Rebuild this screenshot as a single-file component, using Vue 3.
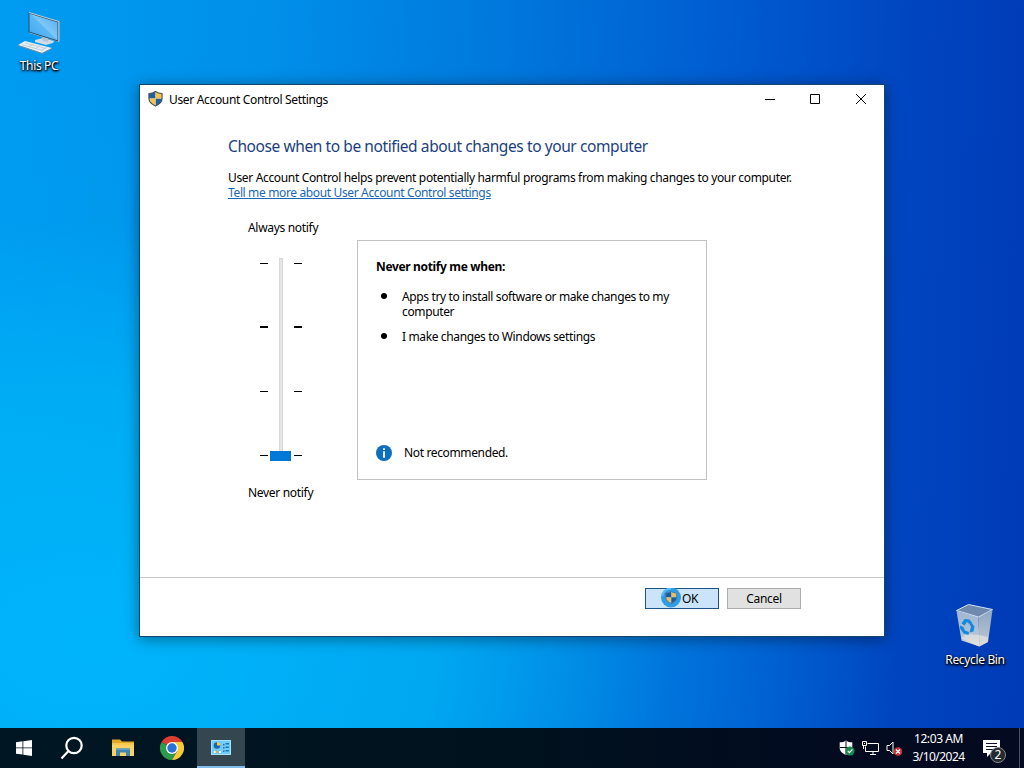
<script setup>
const ticks = [
  { id: 4, bold: false },
  { id: 3, bold: true },
  { id: 2, bold: false },
  { id: 1, bold: false },
]
const shield = 'M8 0.5C6 2 3.5 2.6 1 2.6V8c0 4 3.2 6.3 7 8 3.800-1.700 7-4 7-8V2.600C12.500 2.600 10 2 8 .5Z'
</script>

<template>
  <div class="desktop">
    <div class="shortcut pc">
      <svg width="44" height="44" viewBox="0 0 44 44">
        <defs>
          <linearGradient id="scr" x1="0" y1="1" x2="1" y2="0">
            <stop offset="0" stop-color="#3ba4ee" /><stop offset=".5" stop-color="#5cb8f5" /><stop offset=".52" stop-color="#7cc8f8" /><stop offset="1" stop-color="#4faaf0" />
          </linearGradient>
        </defs>
        <path d="M18 29l8-2 11 3-1 2-7 2-11-3z" fill="#cfdbe6" />
        <path d="M25 26l6 1v4l-5-1z" fill="#b3c4d4" />
        <path d="M12 2l30 9v20l-30-9z" fill="#c5d2dc" />
        <path d="M12 2l29 9v19l-29-9z" fill="url(#scr)" stroke="#2b4a68" stroke-width="1" />
        <path d="M12 1.500l30 9v20" fill="none" stroke="#c3ccd3" stroke-width="1" />
        <path d="M1 34l7-4 27 7-10 5z" fill="#e8eef3" />
        <path d="M5 33.800l21 5.700M8 32l21 5.500M11 36l7-4M18 38l6-4M24 39.500l6-3.500" stroke="#b4c5d3" stroke-width=".7" />
        <path d="M1 34l24 8 10-5v1l-10 5-24-8z" fill="#778e9f" />
      </svg>
      <span class="label">This PC</span>
    </div>

    <div class="shortcut bin">
      <svg width="42" height="46" viewBox="0 0 42 46">
        <defs>
          <linearGradient id="binL" x1="0" y1="0" x2="0" y2="1"><stop offset="0" stop-color="#9fb6d3" /><stop offset=".75" stop-color="#b4c4d8" /><stop offset="1" stop-color="#e2dfd5" /></linearGradient>
          <linearGradient id="binR" x1="0" y1="0" x2="0" y2="1"><stop offset="0" stop-color="#8ca6c5" /><stop offset="1" stop-color="#c3c9cf" /></linearGradient>
        </defs>
        <path d="M2.500 9l22 6 1 29.500-18-6z" fill="url(#binL)" />
        <path d="M24.500 15l14-7-4.500 32-8.500 4.500z" fill="url(#binR)" />
        <path d="M2.500 8.500l12-6 24 5-14 7.500z" fill="#6f8aad" stroke="#d7e3f0" stroke-width="1" />
        <path d="M7 36l18 8.500 9-4.500v-5l-9-2-12-1z" fill="#ede9df" opacity=".6" />
        <g fill="#128bdc">
          <path d="M7.500 21.500l3-4.500 5 .5 2.500 3-2.500 1.500-2.500-2-2.500 3.500z" />
          <path d="M17 20l3.500 4.500-1 5-4 1 1-4 .5-2-1.500-2z" />
          <path d="M6 23.500l3.500 1.500 1.500 3.500 4 1.500-.5 3-5-1.500-3.500-5z" />
        </g>
      </svg>
      <span class="label">Recycle Bin</span>
    </div>

    <section class="window">
      <header class="titlebar">
        <svg class="title-shield" width="15" height="16" viewBox="0 0 16 17">
          <clipPath id="sh"><path :d="shield" /></clipPath>
          <g clip-path="url(#sh)">
            <path d="M0 0h8v8H0zM8 8h8v9H8z" fill="#1e5fa8" /><path d="M8 0h8v8H8zM0 8h8v9H0z" fill="#f5c24a" />
          </g>
          <path :d="shield" fill="none" stroke="#454f58" stroke-width="1.200" />
        </svg>
        <span class="title">User Account Control Settings</span>
        <div class="caption-buttons">
          <span class="min"><svg width="12" height="12" viewBox="0 0 12 12"><path d="M1 6.500h10" /></svg></span>
          <span><svg width="12" height="12" viewBox="0 0 12 12"><path d="M1.500 1.500h9v9h-9z" /></svg></span>
          <span><svg width="12" height="12" viewBox="0 0 12 12"><path d="M1 1l10 10M11 1L1 11" /></svg></span>
        </div>
      </header>

      <main class="content">
        <h1>Choose when to be notified about changes to your computer</h1>
        <p class="intro">User Account Control helps prevent potentially harmful programs from making changes to your computer.</p>
        <p class="more"><a>Tell me more about User Account Control settings</a></p>
        <div class="row">
          <div class="levels">
            <span>Always notify</span>
            <div class="slider">
              <div class="ticks"><i v-for="t in ticks" :key="t.id" :class="{ bold: t.bold }"></i></div>
              <div class="track"><b></b></div>
              <div class="ticks"><i v-for="t in ticks" :key="t.id" :class="{ bold: t.bold }"></i></div>
            </div>
            <span>Never notify</span>
          </div>
          <div class="panel">
            <h2>Never notify me when:</h2>
            <ul>
              <li><span>Apps try to install software or make changes to my<br />computer</span></li>
              <li><span>I make changes to Windows settings</span></li>
            </ul>
            <div class="note">
              <svg width="16" height="16" viewBox="0 0 16 16"><circle cx="8" cy="8" r="8" fill="#0c6fc0" /><path d="M7.100 3.200h1.800v1.800H7.100zM7.100 6.300h1.800v6.500H7.100z" fill="#fff" /></svg>
              <span>Not recommended.</span>
            </div>
          </div>
        </div>
      </main>

      <footer class="actions">
        <button class="ok">
          <svg width="22" height="20" viewBox="0 0 22 20">
            <circle cx="11" cy="9.500" r="10" fill="#2f9ce6" />
            <path d="M2 8a9.500 9.500 0 0 1 9-7.500" fill="none" stroke="#5bc0f5" stroke-width="2" />
            <g transform="translate(5 3) scale(.78)">
              <g clip-path="url(#sh)"><path d="M0 0h8v8H0zM8 8h8v9H8z" fill="#1c5ba4" /><path d="M8 0h8v8H8zM0 8h8v9H0z" fill="#e3bf70" /></g>
              <path :d="shield" fill="none" stroke="#4f7388" />
            </g>
          </svg><span>OK</span>
        </button>
        <button><span>Cancel</span></button>
      </footer>
    </section>

    <nav class="taskbar">
      <div class="item start"><svg width="18" height="18" viewBox="0 0 18 18" fill="#fff"><path d="M1 3.200l6.500-.9v6.200H1zM8.300 2.200L17 1v7.500H8.300zM1 9.300h6.500v6.300L1 14.700zM8.300 9.300H17V17l-8.700-1.200z" /></svg></div>
      <div class="item search"><svg width="24" height="24" viewBox="0 0 24 24" fill="none" stroke="#fff" stroke-width="2.200"><circle cx="14" cy="9.500" r="7.700" /><path d="M8.500 15L1.500 22.500" /></svg></div>
      <div class="item explorer">
        <svg width="22" height="20" viewBox="0 0 22 20">
          <path d="M0 1.500h8l2 2h12v3H0z" fill="#e5a526" /><path d="M0 5h22v13H0z" fill="#f9d267" /><path d="M0 5h22v2H0z" fill="#f8c94f" />
          <path d="M4 10.500h14V18h-4v-3.500H8V18H4z" fill="#3f85ad" /><path d="M4 10.500h14V12H4z" fill="#5c9fc0" />
        </svg>
      </div>
      <div class="item chrome">
        <svg width="24" height="24" viewBox="0 0 24 24">
          <path d="M12 12L1.600 6a12 12 0 0 1 20.800 0z" fill="#dd3d31" />
          <path d="M12 12L1.600 6A12 12 0 0 0 12 24l5.200-9z" fill="#2c9b4c" />
          <path d="M12 12l5.200 3L12 24A12 12 0 0 0 22.400 6H12z" fill="#f8ca38" />
          <circle cx="12" cy="12" r="6" fill="#fff" /><circle cx="12" cy="12" r="4.700" fill="#2a72d8" />
        </svg>
      </div>
      <div class="item active">
        <svg width="20" height="15" viewBox="0 0 20 15">
          <path d="M0 0h20v15H0z" fill="#72cbf8" /><path d="M.5.5h19v14H.5z" fill="none" stroke="#a5e0fc" />
          <circle cx="6" cy="5.500" r="3.300" fill="#1667b0" /><path d="M6 5.500V2a3.500 3.500 0 0 1 3.500 3.500z" fill="#f6cf48" />
          <path d="M12 4h1.500v1.500H12zM14.500 3H18v1.500h-3.500zM12 7h1.500v1.500H12zM14.500 6.500H18V8h-3.500zM12 10.500h1.500V12H12zM14.500 10H18v1.500h-3.500z" fill="#1b76bd" />
          <path d="M3 11h1.500v2H3zM8 11h2v2H8z" fill="#fff" /><path d="M5.200 10.500h1.500V13H5.200z" fill="#efa240" />
        </svg>
      </div>
      <div class="tray">
        <svg width="16" height="16" viewBox="0 0 16 16">
          <path d="M7 .5C5.500 1.800 3 2.300.7 2.300V8c0 3.500 3 5.500 6.300 7 3.300-1.500 6.300-3.500 6.300-7V2.300C11 2.300 8.500 1.800 7 .5z" fill="#fff" /><path d="M7 1v14M1 7.500h12.500" stroke="#0a1020" stroke-width="1" />
          <circle cx="11" cy="11" r="4.500" fill="#188c50" /><path d="M8.800 11l1.600 1.600 3-3.200" fill="none" stroke="#fff" stroke-width="1.100" />
        </svg>
        <svg width="17" height="16" viewBox="0 0 17 16" fill="none" stroke="#fff"><path d="M5.500 3.500h11v8h-13V6.500M8 14.500h6M11 11.500v3M.5 1.500h4v4h-4zM1.500 6v3" /><path d="M2 3.500h1" /></svg>
        <svg width="17" height="16" viewBox="0 0 17 16"><path d="M1 5.500h2.500L7 2v12l-3.500-3.500H1z" fill="none" stroke="#fff" /><circle cx="12" cy="11.500" r="4.300" fill="#c9343b" /><path d="M10 9.500l4 4M14 9.500l-4 4" stroke="#fff" stroke-width="1.200" /></svg>
      </div>
      <div class="clock"><span class="time">12:03 AM</span><span class="date">3/10/2024</span></div>
      <div class="notifications">
        <svg width="17" height="17" viewBox="0 0 17 17"><path d="M0 0h17v13H8l-4 4v-4H0z" fill="#fff" /><path d="M3 3.500h11M3 6.500h11M3 9.500h8" stroke="#0a1225" /></svg>
        <span class="badge">2</span>
      </div>
      <div class="show-desktop"></div>
    </nav>
  </div>
</template>

<style>
html, body { margin: 0; overflow: hidden; }
</style>

<style scoped>
* { box-sizing: border-box; }
.desktop {
  position: relative; width: 1024px; height: 768px; overflow: hidden;
  font-family: "Noto Sans", "Open Sans", sans-serif; font-size: 12px; line-height: 15px; color: #000;
  white-space: nowrap;
  background:
    radial-gradient(ellipse 800px 580px at 100px 640px, rgba(0, 182, 252, .95), rgba(0, 178, 246, .8) 42%, rgba(0, 160, 240, .3) 72%, rgba(0, 150, 240, 0) 100%),
    linear-gradient(92deg, #009cf2 0%, #0090ea 25%, #0078dc 48%, #005bd0 70%, #0045c0 87%, #003ab6 100%);
}
.shortcut { position: absolute; display: flex; flex-direction: column; align-items: center; color: #fff; }
.shortcut svg { flex: none; }
.label { text-shadow: 0 1px 2px #000, 1px 1px 2px #000, 0 1px 3px rgba(0, 0, 0, .8); letter-spacing: -.35px; }
.pc { left: 0; top: 11px; width: 78px; }
.pc .label { margin-top: 3px; }
.bin { left: 935px; top: 602px; width: 80px; }
.bin .label { margin-top: 4px; }

.window {
  position: absolute; left: 139px; top: 84px; width: 746px; height: 553px;
  display: flex; flex-direction: column; background: #fff; border: 1px solid #12466e;
  box-shadow: 0 2px 14px rgba(0, 0, 0, .42);
}
.titlebar { height: 30px; display: flex; align-items: center; padding-left: 8px; flex: none; }
.title-shield { margin-top: -3px; }
.title { margin: -2px 0 0 6px; letter-spacing: -.33px; }
.caption-buttons { margin-left: auto; display: flex; align-self: stretch; }
.caption-buttons span { width: 46px; display: flex; align-items: center; justify-content: center; padding-bottom: 2px; }
.caption-buttons .min { padding-left: 2px; }
.caption-buttons svg { stroke: #000; fill: none; stroke-width: 1; }

.content { flex: 1; padding-left: 88px; }
h1, h2, p, ul { margin: 0; padding: 0; font-weight: 400; }
h1 { margin-top: 19px; font-size: 15.5px; line-height: 24px; color: #1b3f80; letter-spacing: -.41px; }
.intro { margin-top: 12px; letter-spacing: -.34px; }
.more { color: #1a68b5; letter-spacing: -.36px; }
.more a { text-decoration: underline; text-underline-offset: 1px; }
.row { display: flex; margin-top: 20px; }
.levels { width: 129px; padding-left: 20px; display: flex; flex-direction: column; letter-spacing: -.31px; }
.slider { display: flex; margin: 23px 0 24px 12px; height: 203px; }
.ticks { width: 8px; height: 193px; margin-top: 5px; display: flex; flex-direction: column; justify-content: space-between; }
.ticks i { height: 1px; background: #000; }
.ticks i.bold { height: 2px; position: relative; top: -1px; }
.track { width: 26px; }
.track::before { content: ""; display: block; box-sizing: border-box; width: 4px; height: 193px; margin-left: 11px; background: #e4e6e6; border: 1px solid #d8d8d8; border-bottom: 0; }
.track b { display: block; width: 21px; height: 10px; margin-left: 2px; background: #0078d7; }
.panel { width: 350px; height: 240px; margin-top: 20px; border: 1px solid #c2c2c2; padding: 18px; display: flex; flex-direction: column; }
h2 { font-size: 12px; line-height: 16px; font-weight: 700; letter-spacing: -.35px; }
ul { list-style: none; margin-top: 14px; }
li { display: flex; margin-bottom: 10px; letter-spacing: -.37px; }
li::before { content: ""; width: 6px; height: 6px; margin: 4px 15px 0 5px; border-radius: 50%; background: #000; }
.note { margin-top: auto; display: flex; align-items: center; gap: 12px; letter-spacing: -.36px; }
.note span { margin-top: -1px; }
.actions { height: 59px; border-top: 1px solid #c8c8c8; display: flex; justify-content: flex-end; gap: 8px; padding: 10px 83px 0 0; }
button { width: 74px; height: 21px; padding: 0; border: 1px solid #adadad; background: #e1e1e1; font: inherit; color: #000; display: flex; align-items: center; justify-content: center; letter-spacing: -.3px; }
.ok { border-color: #1d5488; background: #cce4f9; padding-right: 6px; }
.ok svg { margin-top: -2px; }

.taskbar { position: absolute; left: 0; right: 0; bottom: 0; height: 40px; display: flex; align-items: stretch; color: #fff; background: linear-gradient(90deg, #001723, #00121e 50%, #020b20 80%, #040a20); }
.item { width: 50px; display: flex; align-items: center; justify-content: center; }
.start, .search { width: 48.500px; }
.start { padding-right: 1px; }
.search { padding-right: 2px; }
.explorer { padding-left: 1px; }
.item.active { width: 48px; background: #34464f; border-bottom: 2px solid #80bdec; }
.tray { margin-left: auto; display: flex; align-items: center; width: 72px; gap: 7px; }
.clock { width: 56px; display: flex; flex-direction: column; align-items: center; line-height: 18px; padding: 2px 1px 0 0; letter-spacing: -.4px; }
.date { letter-spacing: -.55px; }
.notifications { position: relative; width: 52px; padding: 12px 0 0 16px; }
.badge { position: absolute; left: 23px; top: 19px; width: 16px; height: 16px; border-radius: 50%; background: #252a31; border: 1px solid #858990; font-size: 12px; line-height: 14px; text-align: center; }
.show-desktop { width: 5px; border-left: 1px solid #49525e; }
</style>
